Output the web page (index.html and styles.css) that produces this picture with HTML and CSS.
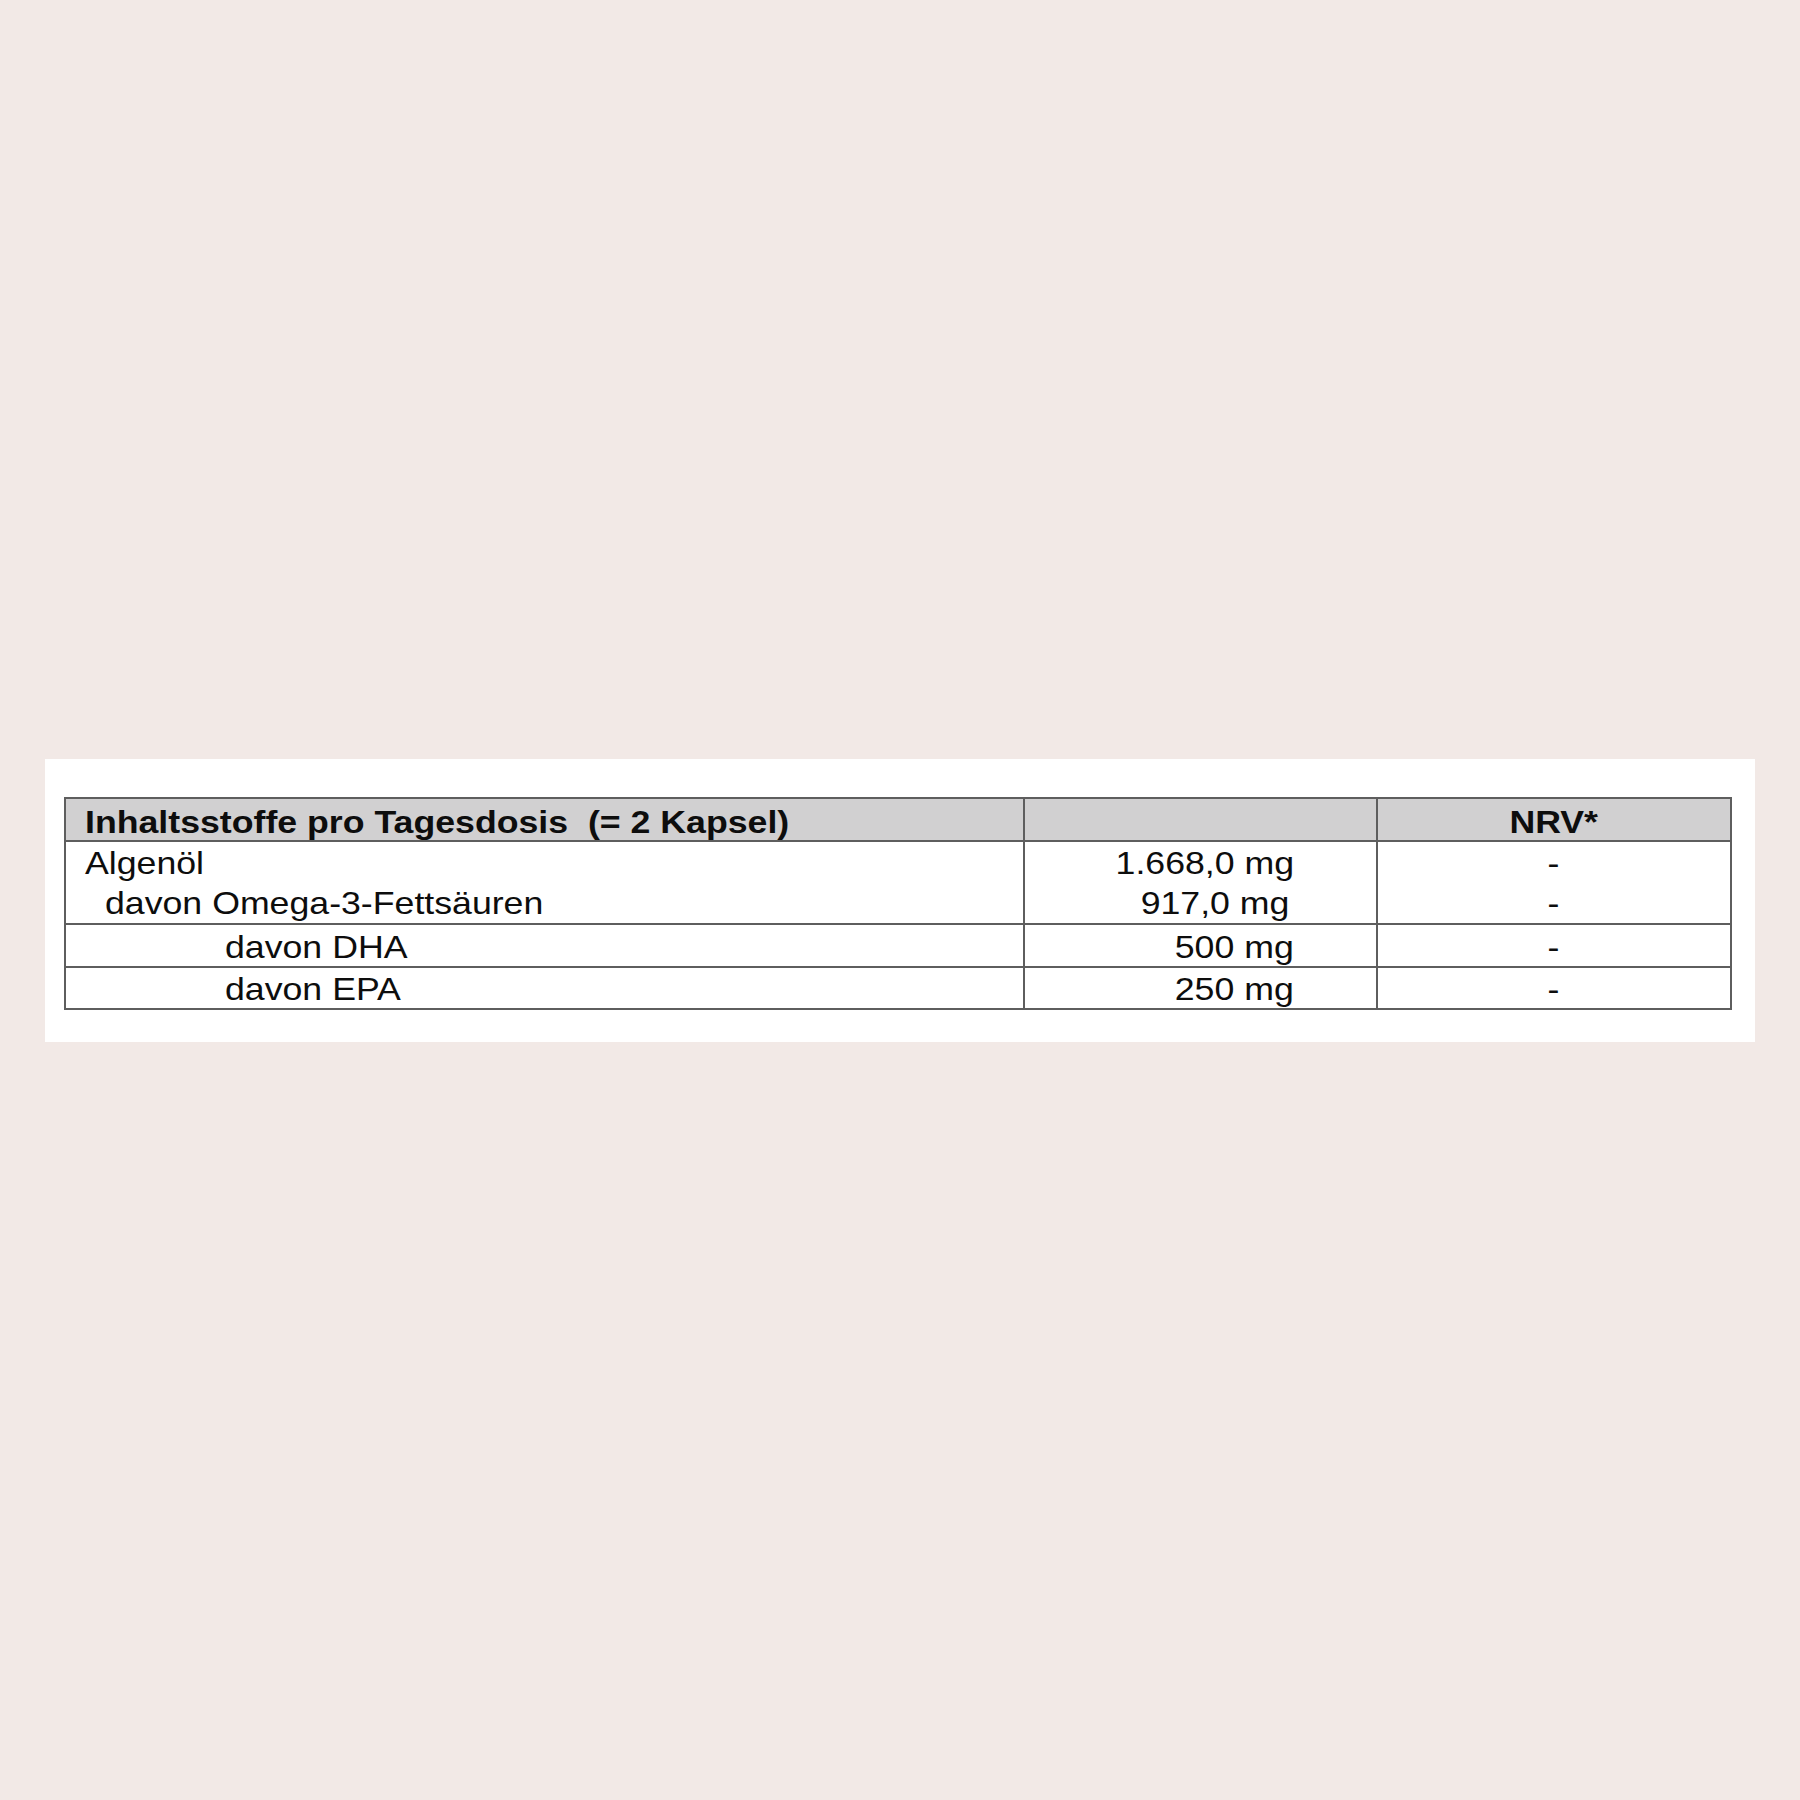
FILE: index.html
```html
<!DOCTYPE html>
<html lang="de">
<head>
<meta charset="utf-8">
<title>Inhaltsstoffe</title>
<link rel="stylesheet" href="styles.css">
</head>
<body>
<div class="card">
  <table class="facts">
    <colgroup>
      <col class="c-name">
      <col class="c-amount">
      <col class="c-nrv">
    </colgroup>
    <thead>
      <tr>
        <th class="name"><span class="tx">Inhaltsstoffe pro Tagesdosis&nbsp; (= 2 Kapsel)</span></th>
        <th class="amount"></th>
        <th class="nrv"><span class="tx">NRV*</span></th>
      </tr>
    </thead>
    <tbody>
      <tr class="r1">
        <td class="name">
          <div><span class="tx">Algenöl</span></div>
          <div class="indent1"><span class="tx">davon Omega-3-Fettsäuren</span></div>
        </td>
        <td class="amount">
          <div><span class="tx">1.668,0 mg</span></div>
          <div class="shift"><span class="tx">917,0 mg</span></div>
        </td>
        <td class="nrv">
          <div><span class="tx">-</span></div>
          <div><span class="tx">-</span></div>
        </td>
      </tr>
      <tr class="r2">
        <td class="name"><div class="indent2"><span class="tx">davon DHA</span></div></td>
        <td class="amount"><span class="tx">500 mg</span></td>
        <td class="nrv"><span class="tx">-</span></td>
      </tr>
      <tr class="r3">
        <td class="name"><div class="indent2"><span class="tx">davon EPA</span></div></td>
        <td class="amount"><span class="tx">250 mg</span></td>
        <td class="nrv"><span class="tx">-</span></td>
      </tr>
    </tbody>
  </table>
</div>
</body>
</html>
```

FILE: styles.css
```css
html, body {
  margin: 0;
  padding: 0;
}

body {
  background: #f2e9e6;
  min-height: 1800px;
  display: flex;
  align-items: center;
  padding: 0 45px;
  box-sizing: border-box;
  font-family: "Liberation Sans", Arial, Helvetica, sans-serif;
  color: #0d0d0d;
}

.card {
  background: #ffffff;
  width: 1710px;
  box-sizing: border-box;
  padding: 38px 25px 32px 19px;
}

.facts {
  border-collapse: collapse;
  table-layout: fixed;
  width: 1666px;
  font-size: 32px;
  line-height: 40px;
}

.c-name { width: 959px; }
.c-amount { width: 353px; }
.c-nrv { width: 354px; }

.facts th,
.facts td {
  border: 2px solid #5e5e5e;
  padding: 0;
  vertical-align: top;
  white-space: nowrap;
}

.facts thead th {
  background: #d1d0d1;
  font-weight: bold;
  line-height: 38px;
  padding-top: 3px;
  padding-bottom: 0;
}

.facts tbody tr.r1 td {
  padding-top: 0;
  padding-bottom: 1px;
}

.facts tbody tr.r2 td {
  padding-top: 1px;
}

.facts tbody tr.r3 td {
  padding-top: 1px;
  line-height: 39px;
}

.facts tbody tr + tr td {
  border-top-color: #7a7a7a;
}

.tx {
  display: inline-block;
  transform: translateY(1px) scaleX(1.115);
}

.name {
  text-align: left;
  padding-left: 19px !important;
}

.name .tx {
  transform-origin: left center;
}

.amount {
  text-align: right;
  padding-right: 82px !important;
}

.amount .tx {
  transform-origin: right center;
}

.nrv {
  text-align: center;
  padding-right: 1px !important;
}

.nrv .tx {
  transform-origin: center center;
}

.indent1 {
  padding-left: 20px;
}

.indent2 {
  padding-left: 140px;
}

.shift {
  padding-right: 5px;
}
```
